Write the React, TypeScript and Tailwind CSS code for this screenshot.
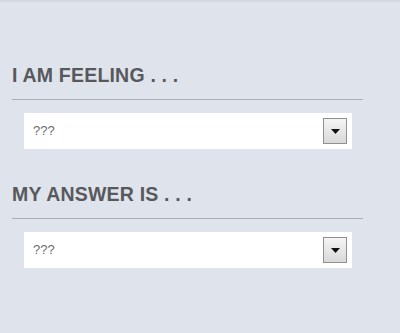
const fields = ["I AM FEELING . . .", "MY ANSWER IS . . ."];

const SelectBox = ({ value }: { value: string }) => {
  return (
    <div className="ml-3 mt-[13px] flex h-9 w-[328px] items-center justify-between bg-white pl-[9px] pr-[5px]">
      <span className="text-[13px] text-[#6b6b6b]">{value}</span>
      <div className="flex h-[26px] w-6 items-center justify-center border border-[#909090] bg-gradient-to-b from-[#f5f5f5] to-[#d9d9d9]">
        <svg width="9" height="5" viewBox="0 0 9 5">
          <path d="M0 0h9L4.5 5z" fill="#111" />
        </svg>
      </div>
    </div>
  );
};

export default function App() {
  return (
    <div
      className="h-[333px] w-[400px] border-t-2 border-[#d4d8e1] bg-[#dfe3eb] pl-3 pt-[62.5px]"
      style={{ fontFamily: '"Liberation Sans", Arial, sans-serif' }}
    >
      {fields.map((label, i) => (
        <div key={label} className={i > 0 ? "mt-[34.5px]" : ""}>
          <h2 className="text-[19.5px] font-bold leading-[20px] tracking-[0.2px] text-[#58595d]">{label}</h2>
          <div className="mt-[14px] h-[1.5px] w-[351px] bg-[#a9aebb]" />
          <SelectBox value="???" />
        </div>
      ))}
    </div>
  );
}
